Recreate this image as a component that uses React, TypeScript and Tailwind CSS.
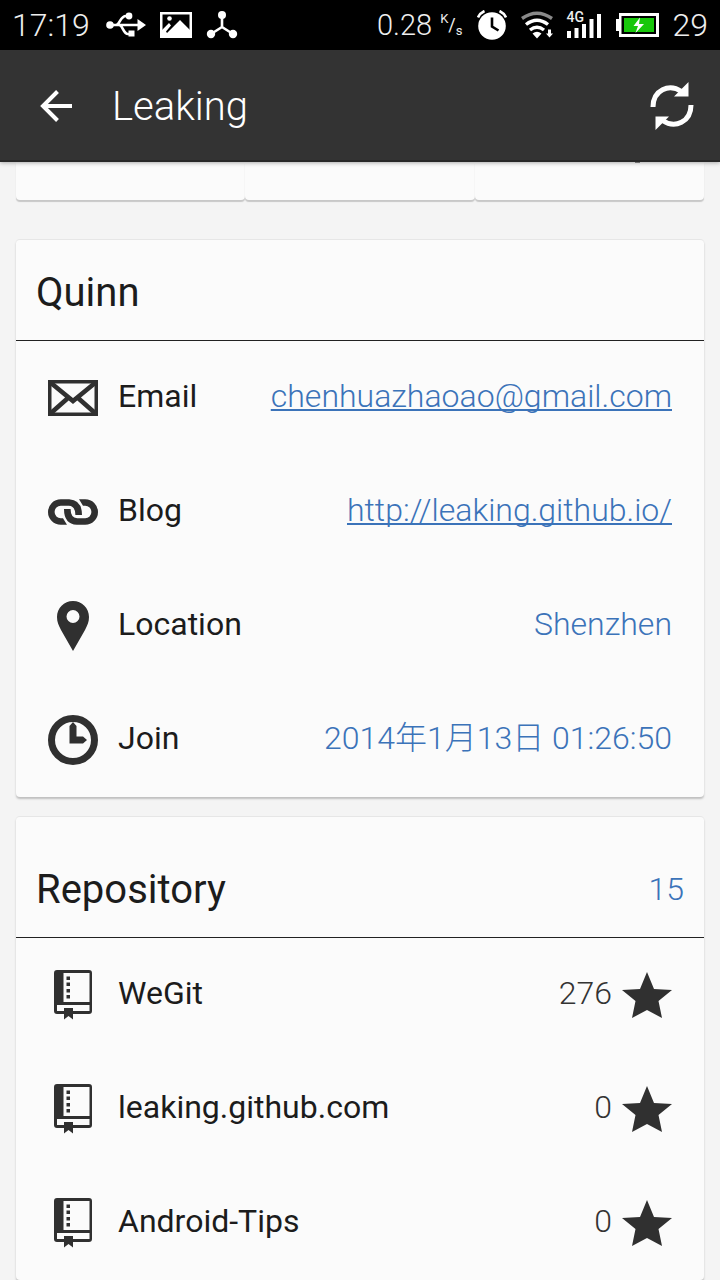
import type { ReactNode } from "react";

function UsbIcon() {
  return (
    <svg width="40" height="26" viewBox="0 0 40 26" fill="none" stroke="#fff" strokeWidth="2.6" aria-hidden="true">
      <path d="M4 13h29M10 13c4 0 4-9 10-9h3M13 13c4 0 4 9 9 9h4" />
      <circle cx="4" cy="13" r="3.8" fill="#fff" stroke="none" />
      <circle cx="23" cy="4" r="3.4" fill="#fff" stroke="none" />
      <path d="M22.500 18.500h6v6h-6zM31.500 7v12l8.500-6z" fill="#fff" stroke="none" />
    </svg>
  );
}

function PictureIcon() {
  return (
    <svg width="32" height="26" viewBox="0 0 32 26" aria-hidden="true">
      <path fill="#fff" fillRule="evenodd" d="M0 0h32v26H0zM2.500 2.500v21h27v-21z" />
      <path fill="#fff" d="M2 24v-6l7-7 2 2.500-5 6 1 1.500L20 8l10 10v6z" />
      <circle cx="9.500" cy="6.500" r="2.300" fill="#fff" />
    </svg>
  );
}

function HubIcon() {
  return (
    <svg width="32" height="28" viewBox="0 0 32 28" fill="#fff" aria-hidden="true">
      <path d="M16 4v13M16 16L5 23M16 16l11 7" stroke="#fff" strokeWidth="2.600" />
      <circle cx="16" cy="4" r="4" />
      <circle cx="5" cy="23" r="4.200" />
      <circle cx="27" cy="23" r="4.200" />
    </svg>
  );
}

function AlarmIcon() {
  return (
    <svg width="30" height="30" viewBox="0 0 30 30" aria-hidden="true">
      <circle cx="15" cy="16" r="13.800" fill="#fff" />
      <path d="M1 7.500Q3 3 7.500 1M29 7.500Q27 3 22.500 1" fill="none" stroke="#fff" strokeWidth="2.600" />
      <path d="M15 7.500v9l6.500 4" fill="none" stroke="#000" strokeWidth="2.600" />
    </svg>
  );
}

function WifiIcon() {
  return (
    <svg width="32" height="28" viewBox="0 0 32 28" fill="none" stroke="#fff" strokeWidth="3.400" aria-hidden="true">
      <path d="M1 7.500Q16-3 31 7.500" stroke="#8a8a8a" />
      <path d="M5 13.500Q16 5 27 13.500M9 19Q16 13.500 23 19" />
      <path d="M11.500 22.500q4.500-3.500 9 0L16 27.500zM27 18.500h3v4h2l-3.500 4-3.500-4h2z" fill="#fff" stroke="none" />
    </svg>
  );
}

function SignalBars() {
  return (
    <svg width="35" height="28" viewBox="0 0 35 28" fill="#fff" aria-hidden="true">
      <path d="M0 20h4v7H0zM7.500 17h4v10h-4zM15 13h4v14h-4zM22.500 8h4v19h-4zM30 3h4v24h-4z" />
    </svg>
  );
}

function BatteryIcon() {
  return (
    <svg width="43" height="24" viewBox="0 0 43 24" aria-hidden="true">
      <path d="M0 6h3V0h40v24H3v-6H0z" fill="#fff" />
      <path d="M5.500 3h34.500v18H5.500z" fill="#000" />
      <path d="M8 5h30v14H8z" fill="#18c70b" />
      <path d="M24 4.500l-6.500 8.500h4.500l-2.500 7 8.500-9h-5z" fill="#fff" />
    </svg>
  );
}

function BackIcon() {
  return (
    <svg width="32" height="32" viewBox="0 0 32 32" fill="none" stroke="#fff" strokeWidth="4" aria-hidden="true">
      <path d="M32 16H3M17.500 1.500L3 16l14.500 14.500" />
    </svg>
  );
}

function RefreshIcon() {
  return (
    <svg width="44" height="48" viewBox="0 0 44 48" aria-hidden="true">
      <path d="M3 25C3 8 19 1 31.500 9.500M41 23C41 40 25 47 12.500 38.500" fill="none" stroke="#fff" strokeWidth="5" />
      <path d="M38.500 0v14.500H24zM5.500 48V34.500H19z" fill="#fff" />
    </svg>
  );
}

function MailIcon() {
  return (
    <svg width="50" height="36" viewBox="0 0 50 36" fill="none" stroke="#303030" aria-hidden="true">
      <path d="M1.750 1.750h46.500v32.500H1.750z" strokeWidth="3.500" />
      <path d="M3 3l22 18L47 3M3 33l17-15M47 33L30 18" strokeWidth="4.600" />
    </svg>
  );
}

function LinkIcon() {
  return (
    <svg width="50" height="26" viewBox="0 0 50 26" fill="none" stroke="#303030" strokeWidth="6.600" aria-hidden="true">
      <path d="M14 22.500H12.800A9.500 9.500 0 0 1 12.800 3.500H21Q30.700 4 30.700 16" />
      <path d="M36 3.500h1.200a9.500 9.500 0 0 1 0 19H29Q19.300 22 19.300 10" />
      <path d="M31 .200h5v6.600h-1zQ34 3 31 .200zM19 25.800h-5v-6.600h1z" fill="#303030" stroke="none" />
    </svg>
  );
}

function PinIcon() {
  return (
    <svg width="32" height="50" viewBox="0 0 32 50" aria-hidden="true">
      <path
        fill="#303030"
        fillRule="evenodd"
        d="M16 0C7 0 0 7 0 16c0 5 1.500 8 4 13l12 21 12-21c2.500-5 4-8 4-13C32 7 25 0 16 0zm0 9a6.500 6.500 0 1 1 0 13 6.500 6.500 0 0 1 0-13z"
      />
    </svg>
  );
}

function ClockIcon() {
  return (
    <svg width="50" height="50" viewBox="0 0 50 50" aria-hidden="true">
      <circle cx="25" cy="25" r="21.500" fill="none" stroke="#303030" strokeWidth="7" />
      <path d="M21.500 28.500V11L25 7l3.500 4v10.500H35l4 3.500-4 3.500z" fill="#303030" />
    </svg>
  );
}

function RepoIcon() {
  return (
    <svg width="38" height="50" viewBox="0 0 38 50" aria-hidden="true">
      <path
        fill="#303030"
        fillRule="evenodd"
        d="M3 0h32q3 0 3 3v38q0 3-3 3H19v5.500L14.500 46 10 49.500V44H3q-3 0-3-3V3q0-3 3-3zM9.500 3v29h26V3zM3 35v6h7v-3h9v3h16.500v-6z"
      />
      <path d="M12.500 6.500H16V10h-3.500zM12.500 12.500H16V16h-3.500zM12.500 19H16v3.500h-3.500zM12.500 25H16v3.500h-3.500z" fill="#303030" />
    </svg>
  );
}

function StarIcon() {
  return (
    <svg width="50" height="46" viewBox="0 0 50 46" aria-hidden="true">
      <path d="M25 0l7 17 18 1-13.500 11L40 46l-15-8-15 8 3.500-17L0 18l18-1z" fill="#303030" />
    </svg>
  );
}

function Row({ icon, label, children }: { icon: ReactNode; label: string; children: ReactNode }) {
  return (
    <li className="flex h-[114px] items-center px-8 text-[32px] leading-[38px]">
      <span className="flex w-[50px] justify-center">{icon}</span>
      <span className="ml-5 pb-1 text-[#1c1c1c]">{label}</span>
      <span className="ml-auto flex items-center font-light">{children}</span>
    </li>
  );
}

const card = "rounded-sm border-t border-[#e6e6e6] bg-[#fbfbfb] shadow-[0_2px_2px_#bfbfbf]";
const link = "pb-1 text-[#3b73b9] underline decoration-2 underline-offset-2 [text-decoration-skip-ink:none]";

const repositories = [
  { name: "WeGit", stars: 276 },
  { name: "leaking.github.com", stars: 0 },
  { name: "Android-Tips", stars: 0 },
];

export default function App() {
  return (
    <div className="flex h-screen flex-col overflow-hidden bg-[#f4f4f4] font-['Roboto','Noto_Sans_CJK_SC',sans-serif]">
      <div className="z-20 flex h-[50px] shrink-0 items-center justify-between bg-black px-3 text-[32px] font-light leading-[38px] text-[#eee]">
        <div className="flex items-center gap-[14px]">
          <span className="pr-0.5">17:19</span>
          <UsbIcon />
          <PictureIcon />
          <HubIcon />
        </div>
        <div className="flex items-center gap-[14px]">
          <div className="flex items-center gap-2">
            <span className="text-[29px]">0.28</span>
            <span className="flex text-[13px] font-normal leading-4">
              <span className="pb-3">K</span>
              <span className="text-[18px] leading-7">/</span>
              <span className="pt-3">s</span>
            </span>
          </div>
          <AlarmIcon />
          <WifiIcon />
          <div className="relative">
            <SignalBars />
            <span className="absolute left-0 top-0 text-[14px] font-medium leading-3">4G</span>
          </div>
          <BatteryIcon />
          <span>29</span>
        </div>
      </div>

      <header className="z-10 flex h-28 shrink-0 items-center border-b-2 border-[#282828] bg-[#333] pl-10 pr-[26px] pt-0.5 shadow-[0_1px_4px_#aaa]">
        <button type="button" aria-label="Back">
          <BackIcon />
        </button>
        <h1 className="ml-10 pt-0.5 text-[40px] font-light leading-[48px] text-white">Leaking</h1>
        <button type="button" aria-label="Refresh" className="ml-auto">
          <RefreshIcon />
        </button>
      </header>

      <main className="min-h-0 flex-1 overflow-hidden px-4">
        <div className="grid h-[38px] grid-cols-3">
          <div className="rounded-b bg-[#fbfbfb] shadow-[0_2px_1px_#c8c8c8]" />
          <div className="rounded-b bg-[#fbfbfb] shadow-[0_2px_1px_#c8c8c8]" />
          <div className="rounded-b bg-[#fbfbfb] pl-40 shadow-[0_2px_1px_#c8c8c8]">
            <div className="h-px w-[5px] bg-[#1c1c1c]" />
          </div>
        </div>

        <section className={`mt-[39px] ${card}`}>
          <div className="flex h-[101px] items-center border-b border-[#222] px-5 pt-1.5">
            <h2 className="text-[40px] leading-[48px] text-[#1c1c1c]">Quinn</h2>
          </div>
          <ul>
            <Row icon={<MailIcon />} label="Email">
              <a href="mailto:chenhuazhaoao@gmail.com" className={link}>
                chenhuazhaoao@gmail.com
              </a>
            </Row>
            <Row icon={<LinkIcon />} label="Blog">
              <a href="http://leaking.github.io/" className={link}>
                http://leaking.github.io/
              </a>
            </Row>
            <Row icon={<PinIcon />} label="Location">
              <span className="pb-1 text-[#3b73b9]">Shenzhen</span>
            </Row>
            <Row icon={<ClockIcon />} label="Join">
              <span className="pb-1 text-[#3b73b9]">2014年1月13日 01:26:50</span>
            </Row>
          </ul>
        </section>

        <section className={`mt-[19px] ${card}`}>
          <div className="flex h-[121px] items-center justify-between border-b border-[#222] px-5 pt-6">
            <h2 className="pt-0.5 text-[40px] leading-[48px] text-[#1c1c1c]">Repository</h2>
            <span className="text-[32px] font-light leading-[38px] text-[#3b73b9]">15</span>
          </div>
          <ul>
            {repositories.map((repo) => (
              <Row key={repo.name} icon={<RepoIcon />} label={repo.name}>
                <span className="mr-[10px] pb-1 text-[#333]">{repo.stars}</span>
                <StarIcon />
              </Row>
            ))}
          </ul>
        </section>
      </main>
    </div>
  );
}
